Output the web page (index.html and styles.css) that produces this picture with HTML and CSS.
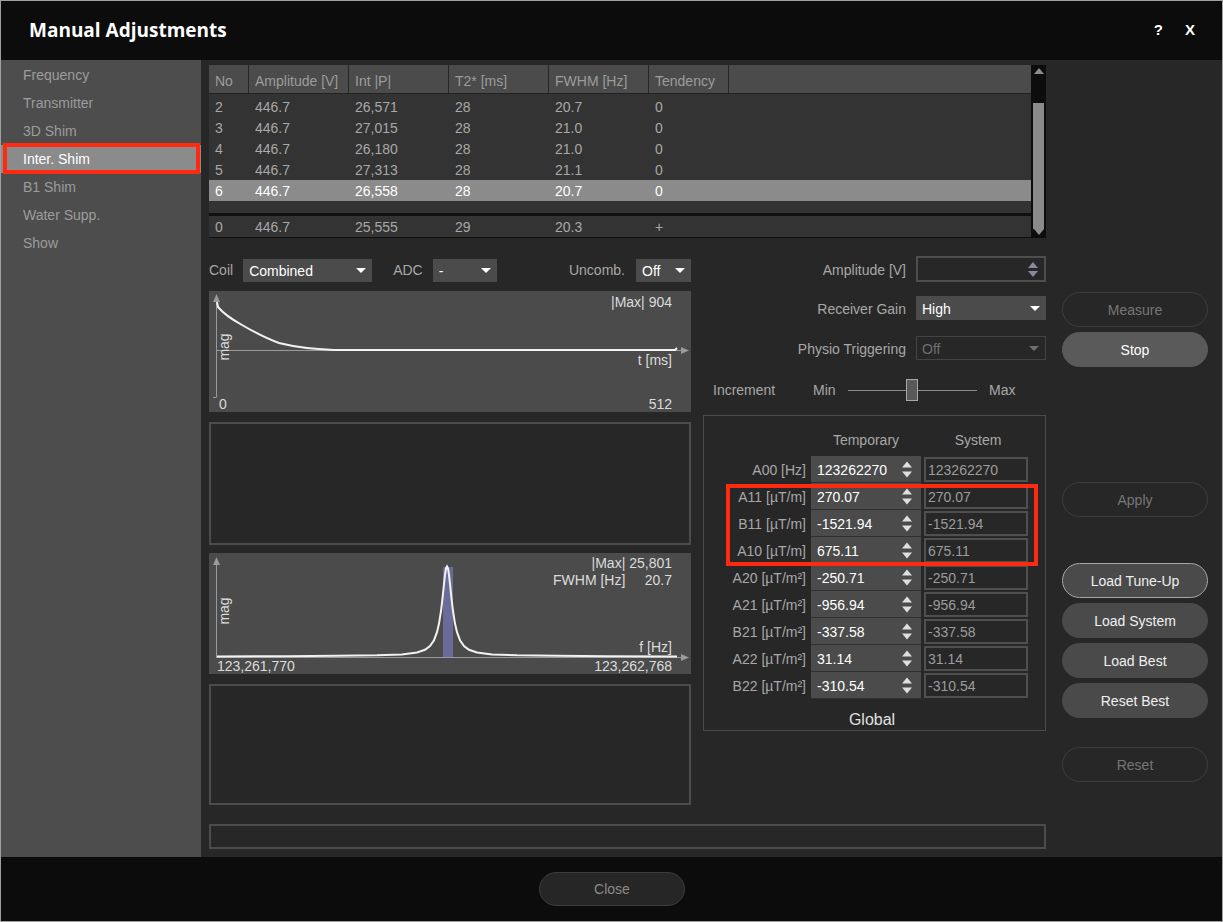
FILE: index.html
```html
<!DOCTYPE html>
<html>
<head>
<meta charset="utf-8">
<link rel="stylesheet" href="styles.css">
</head>
<body>
<div class="window">
  <header class="titlebar">
    <h1 class="title">Manual Adjustments</h1>
    <div class="title-actions"><span>?</span><span>X</span></div>
  </header>
  <div class="content">
    <nav class="sidebar">
      <div class="nav-item">Frequency</div>
      <div class="nav-item">Transmitter</div>
      <div class="nav-item">3D Shim</div>
      <div class="nav-item active">Inter. Shim</div>
      <div class="nav-item">B1 Shim</div>
      <div class="nav-item">Water Supp.</div>
      <div class="nav-item">Show</div>
      <div class="annot annot-nav"></div>
    </nav>
    <main class="main">
      <section class="workspace">
        <div class="results">
          <div class="grid-table">
            <div class="tr thead">
              <div class="td c-no">No</div><div class="td c-amp">Amplitude [V]</div><div class="td c-int">Int |P|</div><div class="td c-t2">T2* [ms]</div><div class="td c-fwhm">FWHM [Hz]</div><div class="td c-tend">Tendency</div><div class="td c-fill"></div>
            </div>
            <div class="tbody">
              <div class="tr"><div class="td c-no">2</div><div class="td c-amp">446.7</div><div class="td c-int">26,571</div><div class="td c-t2">28</div><div class="td c-fwhm">20.7</div><div class="td c-tend">0</div></div>
              <div class="tr"><div class="td c-no">3</div><div class="td c-amp">446.7</div><div class="td c-int">27,015</div><div class="td c-t2">28</div><div class="td c-fwhm">21.0</div><div class="td c-tend">0</div></div>
              <div class="tr"><div class="td c-no">4</div><div class="td c-amp">446.7</div><div class="td c-int">26,180</div><div class="td c-t2">28</div><div class="td c-fwhm">21.0</div><div class="td c-tend">0</div></div>
              <div class="tr"><div class="td c-no">5</div><div class="td c-amp">446.7</div><div class="td c-int">27,313</div><div class="td c-t2">28</div><div class="td c-fwhm">21.1</div><div class="td c-tend">0</div></div>
              <div class="tr selected"><div class="td c-no">6</div><div class="td c-amp">446.7</div><div class="td c-int">26,558</div><div class="td c-t2">28</div><div class="td c-fwhm">20.7</div><div class="td c-tend">0</div></div>
            </div>
            <div class="tfoot">
              <div class="tr"><div class="td c-no">0</div><div class="td c-amp">446.7</div><div class="td c-int">25,555</div><div class="td c-t2">29</div><div class="td c-fwhm">20.3</div><div class="td c-tend">+</div></div>
            </div>
          </div>
          <div class="scrollbar">
            <div class="sb-up"></div>
            <div class="sb-track"><div class="sb-thumb"></div></div>
            <div class="sb-down"></div>
          </div>
        </div>

        <div class="lower">
          <div class="left-col">
            <div class="controls">
              <span class="ctl-label">Coil</span>
              <div class="select sel-coil"><span>Combined</span><i class="caret"></i></div>
              <span class="ctl-label lbl-adc">ADC</span>
              <div class="select sel-adc"><span>-</span><i class="caret"></i></div>
              <span class="ctl-label lbl-uncomb">Uncomb.</span>
              <div class="select sel-off"><span>Off</span><i class="caret"></i></div>
            </div>
            <div class="chart chart1">
              <svg width="482" height="121" viewBox="0 0 482 121">
                <g stroke="#9a9a9a" stroke-width="1" fill="none">
                  <line x1="7.5" y1="9" x2="7.5" y2="106"/>
                  <line x1="4" y1="106.5" x2="7.5" y2="106.5"/>
                  <line x1="7" y1="59.5" x2="473" y2="59.5"/>
                </g>
                <polygon points="7.5,3 4,11 11,11" fill="#9a9a9a"/>
                <polygon points="480,59.5 472,56 472,63" fill="#9a9a9a"/>
                <path d="M8,11 L9,16 C14,22 24,29 33,34 C45,41 56,47 70,52 C86,56 100,58 125,59 L466,59 L468,57" fill="none" stroke="#f2f2f2" stroke-width="2"/>
                <g class="chart-text">
                  <text x="463" y="16" text-anchor="end">|Max| 904</text>
                  <text x="463" y="74" text-anchor="end">t [ms]</text>
                  <text x="10" y="118">0</text>
                  <text x="463" y="118" text-anchor="end">512</text>
                  <text transform="translate(20,56) rotate(-90)" text-anchor="middle">mag</text>
                </g>
              </svg>
            </div>
            <div class="empty-box box2"></div>
            <div class="chart chart2">
              <svg width="482" height="121" viewBox="0 0 482 121">
                <rect x="234" y="14" width="10" height="90" fill="#6b6b9a"/>
                <g stroke="#9a9a9a" stroke-width="1" fill="none">
                  <line x1="7.5" y1="10" x2="7.5" y2="104"/>
                  <line x1="7" y1="104.5" x2="473" y2="104.5"/>
                </g>
                <polygon points="7.5,4 4,12 11,12" fill="#9a9a9a"/>
                <polygon points="480,104.5 472,101 472,108" fill="#9a9a9a"/>
                <path d="M8,103.4 L78,103.2 L128,102.8 L168,102.3 L193,101.4 L208,99.5 L216,96.8 L221,93 L225,87.2 L228,79.2 L230,70.6 L232,58 L233,49.9 L234,40.7 L235,31 L236,22 L237,15.4 L238,13.5 L239,15.4 L240,22 L241,31 L242,40.7 L243,49.9 L244,58 L246,70.6 L248,79.2 L251,87.2 L255,93 L260,96.8 L268,99.5 L283,101.4 L308,102.3 L348,102.8 L398,103.2 L468,103.4" fill="none" stroke="#f2f2f2" stroke-width="2"/>
                <g class="chart-text">
                  <text x="463" y="15" text-anchor="end">|Max| 25,801</text>
                  <text x="344" y="32">FWHM [Hz]</text>
                  <text x="463" y="32" text-anchor="end">20.7</text>
                  <text x="463" y="99" text-anchor="end">f [Hz]</text>
                  <text x="8" y="118">123,261,770</text>
                  <text x="463" y="118" text-anchor="end">123,262,768</text>
                  <text transform="translate(20,58) rotate(-90)" text-anchor="middle">mag</text>
                </g>
              </svg>
            </div>
            <div class="empty-box box4"></div>
          </div>

          <div class="right-col">
            <div class="form-row row-amp">
              <span class="form-label">Amplitude [V]</span>
              <div class="spin-input">
                <svg class="spin-icon" width="10" height="17" viewBox="0 0 10 17"><polygon points="0,7 5,1 10,7"/><polygon points="0,10 10,10 5,16"/></svg>
              </div>
            </div>
            <div class="form-row row-gain">
              <span class="form-label">Receiver Gain</span>
              <div class="select sel-gain"><span>High</span><i class="caret"></i></div>
            </div>
            <div class="form-row row-physio">
              <span class="form-label">Physio Triggering</span>
              <div class="select sel-physio"><span>Off</span><i class="caret"></i></div>
            </div>
            <div class="incr-row">
              <span class="incr-label">Increment</span>
              <span class="incr-min">Min</span>
              <div class="slider">
                <div class="slider-line left"></div>
                <div class="slider-thumb"></div>
                <div class="slider-line"></div>
              </div>
              <span class="incr-max">Max</span>
            </div>
            <div class="shim">
              <div class="shim-head"><span></span><span>Temporary</span><span>System</span></div>
              <div class="shim-row"><span class="shim-label">A00 [Hz]</span><div class="temp"><span>123262270</span><svg class="spin-icon" width="10" height="17" viewBox="0 0 10 17"><polygon points="0,6.5 5,0.5 10,6.5"/><polygon points="0,10.5 10,10.5 5,16.5"/></svg></div><div class="sys">123262270</div></div>
              <div class="shim-row"><span class="shim-label">A11 [µT/m]</span><div class="temp"><span>270.07</span><svg class="spin-icon" width="10" height="17" viewBox="0 0 10 17"><polygon points="0,6.5 5,0.5 10,6.5"/><polygon points="0,10.5 10,10.5 5,16.5"/></svg></div><div class="sys">270.07</div></div>
              <div class="shim-row"><span class="shim-label">B11 [µT/m]</span><div class="temp"><span>-1521.94</span><svg class="spin-icon" width="10" height="17" viewBox="0 0 10 17"><polygon points="0,6.5 5,0.5 10,6.5"/><polygon points="0,10.5 10,10.5 5,16.5"/></svg></div><div class="sys">-1521.94</div></div>
              <div class="shim-row"><span class="shim-label">A10 [µT/m]</span><div class="temp"><span>675.11</span><svg class="spin-icon" width="10" height="17" viewBox="0 0 10 17"><polygon points="0,6.5 5,0.5 10,6.5"/><polygon points="0,10.5 10,10.5 5,16.5"/></svg></div><div class="sys">675.11</div></div>
              <div class="shim-row"><span class="shim-label">A20 [µT/m²]</span><div class="temp"><span>-250.71</span><svg class="spin-icon" width="10" height="17" viewBox="0 0 10 17"><polygon points="0,6.5 5,0.5 10,6.5"/><polygon points="0,10.5 10,10.5 5,16.5"/></svg></div><div class="sys">-250.71</div></div>
              <div class="shim-row"><span class="shim-label">A21 [µT/m²]</span><div class="temp"><span>-956.94</span><svg class="spin-icon" width="10" height="17" viewBox="0 0 10 17"><polygon points="0,6.5 5,0.5 10,6.5"/><polygon points="0,10.5 10,10.5 5,16.5"/></svg></div><div class="sys">-956.94</div></div>
              <div class="shim-row"><span class="shim-label">B21 [µT/m²]</span><div class="temp"><span>-337.58</span><svg class="spin-icon" width="10" height="17" viewBox="0 0 10 17"><polygon points="0,6.5 5,0.5 10,6.5"/><polygon points="0,10.5 10,10.5 5,16.5"/></svg></div><div class="sys">-337.58</div></div>
              <div class="shim-row"><span class="shim-label">A22 [µT/m²]</span><div class="temp"><span>31.14</span><svg class="spin-icon" width="10" height="17" viewBox="0 0 10 17"><polygon points="0,6.5 5,0.5 10,6.5"/><polygon points="0,10.5 10,10.5 5,16.5"/></svg></div><div class="sys">31.14</div></div>
              <div class="shim-row"><span class="shim-label">B22 [µT/m²]</span><div class="temp"><span>-310.54</span><svg class="spin-icon" width="10" height="17" viewBox="0 0 10 17"><polygon points="0,6.5 5,0.5 10,6.5"/><polygon points="0,10.5 10,10.5 5,16.5"/></svg></div><div class="sys">-310.54</div></div>
              <div class="shim-title">Global</div>
              <div class="annot annot-shim"></div>
            </div>
          </div>
        </div>

        <div class="statusbar"></div>
      </section>

      <aside class="actions">
        <button class="btn disabled b-measure">Measure</button>
        <button class="btn b-stop">Stop</button>
        <button class="btn disabled b-apply">Apply</button>
        <button class="btn outlined b-tune">Load Tune-Up</button>
        <button class="btn b-stack">Load System</button>
        <button class="btn b-stack">Load Best</button>
        <button class="btn b-stack">Reset Best</button>
        <button class="btn disabled b-reset">Reset</button>
      </aside>
    </main>
  </div>
  <footer class="footer">
    <button class="btn close">Close</button>
  </footer>
</div>
</body>
</html>
```

FILE: styles.css
```css
* { box-sizing: border-box; }
html, body { margin: 0; padding: 0; background: #0c0c0c; }
body { font-family: "Liberation Sans", Arial, sans-serif; font-size: 14px; color: #a8a8a8; }

.window {
  width: 1223px; height: 922px;
  border: 1px solid #a0a0a0;
  background: #272727;
  display: flex; flex-direction: column;
}

/* title */
.titlebar {
  height: 59px; flex: none;
  background: #0c0c0c;
  display: flex; align-items: center;
  padding: 0 0 0 28px;
}
.title {
  margin: 0;
  font-family: "Open Sans", "Liberation Sans", sans-serif;
  font-weight: 700; font-size: 19px;
  color: #ffffff; letter-spacing: 0;
  position: relative; top: -1px;
}
.title-actions {
  margin-left: auto; display: flex; gap: 22px;
  padding-right: 27px;
  font-weight: 700; font-size: 15px; color: #ffffff;
  position: relative; top: -1px;
}

/* content */
.content { height: 797px; flex: none; display: flex; }

.sidebar {
  width: 200px; flex: none;
  background: #4d4d4d;
  padding-top: 1px;
  position: relative;
}
.nav-item {
  height: 28px; line-height: 28px;
  padding-left: 22px;
  color: #9c9c9c;
}
.nav-item.active { background: #8b8b8b; color: #ffffff; }

.annot { position: absolute; border: 4px solid #ff2a10; pointer-events: none; }
.annot-nav { left: 2px; top: 83px; width: 197px; height: 31px; }

.main {
  flex: 1;
  display: grid;
  grid-template-columns: 837px 146px;
  column-gap: 16px;
  align-items: start;
  padding: 5px 0 0 8px;
}

/* results table */
.results { display: flex; height: 173px; }
.grid-table { flex: 1; background: #333333; display: flex; flex-direction: column; }
.tr { display: flex; height: 21px; align-items: center; }
.td { padding-left: 6px; white-space: nowrap; flex: none; }
.c-no { width: 40px; }
.c-amp, .c-int, .c-t2, .c-fwhm { width: 100px; }
.c-tend { width: 80px; }
.c-fill { flex: 1; }
.thead {
  height: 29px; background: #4b4b4b;
  border-bottom: 1px solid #232323;
  align-items: stretch; color: #9c9c9c;
}
.thead .td { display: flex; align-items: center; padding-top: 3px; border-right: 1px solid #262626; }
.thead .c-fill { border-right: none; }
.tbody { padding-top: 2px; height: 119px; color: #a8a8a8; }
.tr.selected { background: #8b8b8b; color: #ffffff; }
.tfoot { border-top: 3px solid #101010; border-bottom: 1px solid #101010; color: #a8a8a8; }

.scrollbar {
  width: 15px; flex: none; background: #0d0d0d;
  display: flex; flex-direction: column; align-items: center;
  padding: 3px 0;
}
.sb-up { width: 0; height: 0; border-left: 5px solid transparent; border-right: 5px solid transparent; border-bottom: 6px solid #8c8c8c; }
.sb-down { width: 0; height: 0; border-left: 5px solid transparent; border-right: 5px solid transparent; border-top: 6px solid #8c8c8c; }
.sb-track { flex: 1; width: 11px; display: flex; flex-direction: column; justify-content: flex-end; }
.sb-thumb { height: 126px; background: #8a8a8a; }

/* lower area */
.lower {
  margin-top: 18px;
  display: grid;
  grid-template-columns: 482px 343px;
  column-gap: 12px;
}
.left-col { display: flex; flex-direction: column; }
.controls { height: 28px; display: flex; align-items: center; }
.ctl-label { color: #a8a8a8; }
.lbl-adc { margin-left: 21px; }
.lbl-uncomb { margin-left: auto; }

.select {
  height: 23px; background: #4b4b4b; color: #ffffff;
  display: flex; align-items: center; justify-content: space-between;
  padding: 0 6px 0 6px;
}
.select span { position: relative; top: 1px; }
.caret { width: 0; height: 0; border-left: 5px solid transparent; border-right: 5px solid transparent; border-top: 5px solid #ffffff; }
.sel-coil { width: 129px; margin-left: 10px; }
.sel-adc { width: 64px; margin-left: 10px; }
.sel-off { width: 55px; margin-left: 11px; }

.chart { height: 121px; background: #4b4b4b; }
.chart svg { display: block; }
.chart-text text { font-family: "Liberation Sans", Arial, sans-serif; font-size: 14px; fill: #dcdcdc; }
.chart1 { margin-top: 7px; }
.chart2 { margin-top: 8px; }
.empty-box { border: 2px solid #4c4c4c; }
.box2 { margin-top: 10px; height: 123px; }
.box4 { margin-top: 10px; height: 121px; }

/* right column */
.right-col { display: flex; flex-direction: column; }
.form-row { display: grid; grid-template-columns: 203px 130px; column-gap: 10px; align-items: center; }
.form-label { text-align: right; color: #a8a8a8; padding-top: 2px; }
.row-amp { height: 26px; }
.row-gain { height: 24px; margin-top: 14px; }
.row-physio { height: 24px; margin-top: 16px; }
.spin-input {
  height: 26px; border: 2px solid #4e4e4e;
  display: flex; align-items: center; justify-content: flex-end;
  padding-right: 6px;
}
.spin-icon { display: block; fill: #dedede; }
.spin-input .spin-icon { fill: #8b88a6; }
.sel-gain { height: 24px; }
.sel-physio { height: 24px; background: transparent; border: 1px solid #444444; color: #6e6e6e; padding-left: 5px; }
.sel-physio .caret { border-top-color: #6e6e6e; }

.incr-row { height: 24px; margin-top: 18px; display: flex; align-items: center; padding-left: 10px; }
.incr-label { width: 100px; color: #a8a8a8; }
.incr-min { width: 35px; color: #a8a8a8; }
.incr-max { margin-left: 12px; color: #a8a8a8; }
.slider { width: 129px; display: flex; align-items: center; }
.slider-line { height: 1px; background: #8a8a8a; flex: 1; }
.slider-line.left { flex: none; width: 58px; }
.slider-thumb { width: 12px; height: 22px; background: #5a5a5a; border: 1px solid #a8a8a8; }

.shim {
  margin-top: 13px; height: 316px;
  border: 1px solid #4a4a4a;
  padding-top: 14px;
  position: relative;
}
.shim-head {
  display: grid;
  grid-template-columns: 102px 110px 104px;
  column-gap: 5px;
  height: 20px; margin-bottom: 6px; align-items: center; color: #a8a8a8;
}
.shim-head span { text-align: center; }
.shim-row { display: grid; grid-template-columns: 102px 5px 110px 3px 104px; height: 27px; align-items: stretch; }
.shim-label { grid-column: 1; text-align: right; display: flex; align-items: center; justify-content: flex-end; color: #a8a8a8; }
.temp {
  grid-column: 3;
  background: #4b4b4b; color: #ffffff;
  border-bottom: 1px solid #303030;
  display: flex; align-items: center; justify-content: space-between;
  padding: 1px 9px 0 6px;
}
.shim-row:last-of-type .temp { border-bottom: none; }
.sys {
  grid-column: 5;
  margin: 1px 0;
  border: 2px solid #4f4f4f;
  background: #272727;
  color: #9c9c9c;
  display: flex; align-items: center;
  padding: 1px 0 0 2px;
}
.shim-title { margin-top: 11px; height: 20px; line-height: 20px; text-align: center; font-size: 16px; color: #e0e0e0; padding-right: 5px; }
.annot-shim { left: 22px; top: 68px; width: 312px; height: 82px; }

.statusbar { margin-top: 19px; height: 25px; border: 2px solid #4c4c4c; }

/* buttons */
.actions { display: flex; flex-direction: column; }
.btn {
  height: 35px; border-radius: 18px;
  font-family: "Liberation Sans", Arial, sans-serif; font-size: 14px;
  background: #4a4a4a; color: #f0f0f0;
  border: 1px solid #4a4a4a;
  padding: 0;
}
.btn.disabled { background: transparent; border-color: #3d3d3d; color: #767676; }
.b-measure { margin-top: 227px; }
.b-stop { margin-top: 5px; background: #5a5a5a; border-color: #5a5a5a; color: #ffffff; }
.b-apply { margin-top: 115px; }
.b-tune { margin-top: 46px; border-color: #a6a6a6; }
.b-stack { margin-top: 5px; }
.b-reset { margin-top: 29px; }

.footer {
  height: 64px; flex: none;
  background: #0c0c0c;
  display: flex; align-items: center; justify-content: center;
}
.btn.close {
  width: 146px; height: 34px; border-radius: 17px;
  background: #262626; border: 1px solid #3c3c3c; color: #8a8a8a;
  margin-left: 1px;
}
```
